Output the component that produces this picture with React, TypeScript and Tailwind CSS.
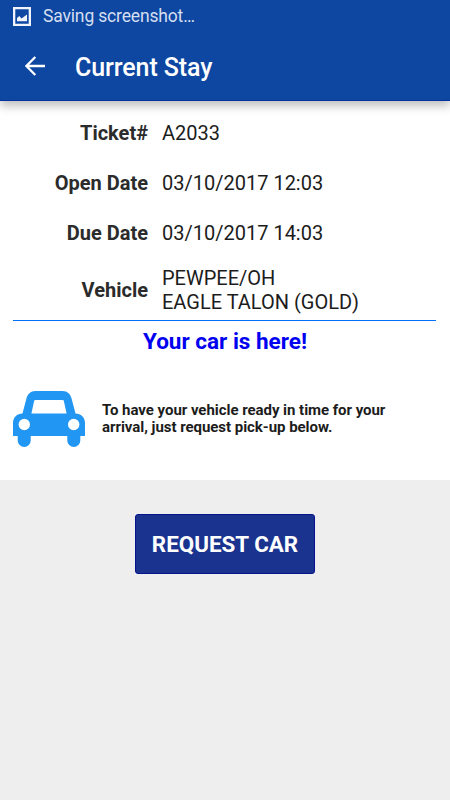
import type { ReactNode } from "react";

type Row = {
  label: string;
  lines: string[];
};

const rows: Row[] = [
  { label: "Ticket#", lines: ["A2033"] },
  { label: "Open Date", lines: ["03/10/2017 12:03"] },
  { label: "Due Date", lines: ["03/10/2017 14:03"] },
  { label: "Vehicle", lines: ["PEWPEE/OH", "EAGLE TALON (GOLD)"] },
];

function PictureIcon() {
  return (
    <svg width="18" height="19" viewBox="0 0 18 19" className="shrink-0">
      <path
        fill="#f1f5fb"
        fillRule="evenodd"
        d="M0 0h18v19H0zM2.3 2.3v14.4h13.4V2.3z"
      />
      <path fill="#f1f5fb" d="M4 14.2V11l2.3-1.9L8.5 11.4l5.5-4v6.8z" />
    </svg>
  );
}

function BackArrow() {
  return (
    <svg width="20" height="20" viewBox="0 0 20 20" className="shrink-0">
      <path
        d="M20 10H1.8M10.3 1L1.4 10l8.9 9"
        fill="none"
        stroke="#fff"
        strokeWidth="2.3"
      />
    </svg>
  );
}

function CarIcon() {
  return (
    <svg width="72" height="56" viewBox="0 0 72 56" className="shrink-0">
      <path
        fill="#2196f3"
        fillRule="evenodd"
        d="M9.5 22.5L13.3 8C14.5 3 17.5 0 22.5 0h27c5 0 8 3 9.2 8l3.8 14.5C68 22.5 72 26.5 72 32v13h-4.7v4.5a6.5 6.5 0 0 1-13 0V45H17.7v4.5a6.5 6.5 0 0 1-13 0V45H0V32c0-5.5 4-9.5 9.5-9.5zM22.5 9c-.9 0-1.2.3-1.4 1.2L18.4 22.5h35.2L50.9 10.2C50.7 9.3 50.4 9 49.500 9z"
      />
      <circle cx="11.3" cy="33.5" r="5.7" fill="#fff" />
      <circle cx="60.7" cy="33.5" r="5.7" fill="#fff" />
    </svg>
  );
}

function StayRow({ label, children }: { label: string; children: ReactNode }) {
  return (
    <div className="flex min-h-[50px] items-center gap-[14px] last:min-h-[63px]">
      <div className="w-[135px] text-right text-[20px] font-bold text-[#2b2b2b]">
        {label}
      </div>
      <div className="text-[20px] leading-[24px] text-[#1c1c1c]">
        {children}
      </div>
    </div>
  );
}

export default function App() {
  return (
    <div className="flex h-[800px] w-[450px] flex-col overflow-hidden bg-[#eeeeee] font-['Roboto',sans-serif]">
      <header className="relative z-10 h-[101px] shrink-0 border-b border-[#00309a] bg-[#0d47a1] shadow-[0_5px_9px_rgba(0,0,0,0.25)]">
        <div className="flex h-8 items-center gap-3 pl-[13px] text-[17.5px] tracking-[-0.16px] text-[#d5dff0]">
          <PictureIcon />
          <span>Saving screenshot…</span>
        </div>
        <div className="flex h-[68px] items-center gap-[30px] pl-[25px]">
          <BackArrow />
          <h1 className="pt-[3px] text-[25px] font-medium tracking-[-0.1px] text-white">
            Current Stay
          </h1>
        </div>
      </header>

      <main className="h-[379px] shrink-0 bg-white pl-[13px] pr-[14px] pt-[7px]">
        <div>
          {rows.map((row) => (
            <StayRow key={row.label} label={row.label}>
              {row.lines.map((line) => (
                <div key={line}>{line}</div>
              ))}
            </StayRow>
          ))}
        </div>

        <p className="-mt-px border-t border-[#0070f8] pt-[3px] pl-px text-center text-[22.5px] font-bold leading-[34px] text-[#0000f0]">
          Your car is here!
        </p>

        <div className="mt-[33px] flex gap-[17px]">
          <CarIcon />
          <p className="pt-[11px] text-[15px] font-bold leading-[17px] tracking-[-0.04px] text-[#1c1c1c]">
            To have your vehicle ready in time for your
            <br />
            arrival, just request pick-up below.
          </p>
        </div>
      </main>

      <div className="flex justify-center pt-[34px]">
        <button className="h-[60px] w-[180px] rounded-[3px] border border-[#06128c] bg-[#1a338f] pt-[2px] text-[22.4px] font-bold text-white">
          REQUEST CAR
        </button>
      </div>
    </div>
  );
}
